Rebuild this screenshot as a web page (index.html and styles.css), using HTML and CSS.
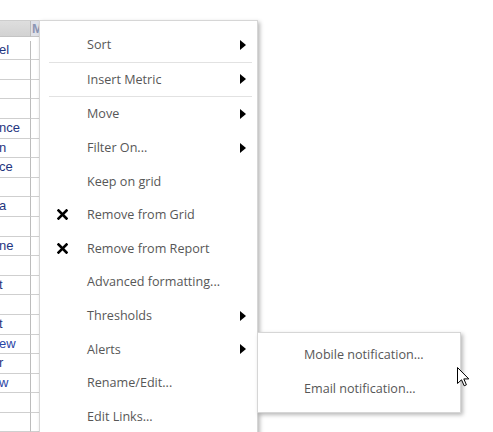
FILE: index.html
```html
<!DOCTYPE html>
<html lang="en">
<head>
<meta charset="utf-8">
<title>Grid context menu</title>
<link rel="stylesheet" href="styles.css">
</head>
<body>
<div class="page">
  <div class="grid">
    <div class="cell head first"></div>
    <div class="cell head second">Measure</div>

    <div class="cell first">el</div><div class="cell"></div>
    <div class="cell first"></div><div class="cell"></div>
    <div class="cell first"></div><div class="cell"></div>
    <div class="cell first"></div><div class="cell"></div>
    <div class="cell first">nce</div><div class="cell"></div>
    <div class="cell first">n</div><div class="cell"></div>
    <div class="cell first">ce</div><div class="cell"></div>
    <div class="cell first"></div><div class="cell"></div>
    <div class="cell first">a</div><div class="cell"></div>
    <div class="cell first"></div><div class="cell"></div>
    <div class="cell first">ne</div><div class="cell"></div>
    <div class="cell first"></div><div class="cell"></div>
    <div class="cell first">t</div><div class="cell"></div>
    <div class="cell first"></div><div class="cell"></div>
    <div class="cell first">t</div><div class="cell"></div>
    <div class="cell first link">ew</div><div class="cell"></div>
    <div class="cell first">r</div><div class="cell"></div>
    <div class="cell first link">w</div><div class="cell"></div>
    <div class="cell first"></div><div class="cell"></div>
    <div class="cell first"></div><div class="cell"></div>
    <div class="cell first"></div><div class="cell"></div>
  </div>

  <div class="menu">
    <div class="item"><span class="icon"></span><span class="label">Sort</span><span class="arrow"></span></div>
    <div class="sep"></div>
    <div class="item"><span class="icon"></span><span class="label">Insert Metric</span><span class="arrow"></span></div>
    <div class="sep"></div>
    <div class="item"><span class="icon"></span><span class="label">Move</span><span class="arrow"></span></div>
    <div class="item"><span class="icon"></span><span class="label">Filter On...</span><span class="arrow"></span></div>
    <div class="item"><span class="icon"></span><span class="label">Keep on grid</span></div>
    <div class="item"><span class="icon"><svg viewBox="0 0 11 11" width="11" height="11"><path d="M1.5 1.5 L9.5 9.5 M9.5 1.5 L1.5 9.5" stroke="#000" stroke-width="2.6" stroke-linecap="square"/></svg></span><span class="label">Remove from Grid</span></div>
    <div class="item"><span class="icon"><svg viewBox="0 0 11 11" width="11" height="11"><path d="M1.5 1.5 L9.5 9.5 M9.5 1.5 L1.5 9.5" stroke="#000" stroke-width="2.6" stroke-linecap="square"/></svg></span><span class="label">Remove from Report</span></div>
    <div class="item"><span class="icon"></span><span class="label">Advanced formatting...</span></div>
    <div class="item"><span class="icon"></span><span class="label">Thresholds</span><span class="arrow"></span></div>
    <div class="item"><span class="icon"></span><span class="label">Alerts</span><span class="arrow"></span></div>
    <div class="item"><span class="icon"></span><span class="label">Rename/Edit...</span></div>
    <div class="item"><span class="icon"></span><span class="label">Edit Links...</span></div>
  </div>

  <div class="submenu">
    <div class="subitem">Mobile notification...</div>
    <div class="subitem">Email notification...</div>
  </div>

  <svg class="cursor" viewBox="0 0 13 20" width="13" height="20">
    <path d="M0.5 0.5 L0.5 16.5 L4.5 12.8 L7.2 18.8 L9.4 17.8 L6.8 11.9 L11.8 11.9 Z" fill="#fff" stroke="#000" stroke-width="1" stroke-linejoin="miter"/>
  </svg>
</div>
</body>
</html>
```

FILE: styles.css
```css
html, body {
  margin: 0;
  padding: 0;
  background: #fff;
}

.page {
  position: relative;
  width: 493px;
  height: 432px;
  overflow: hidden;
  font-family: "Liberation Sans", Arial, sans-serif;
}

/* data grid underneath the menu, scrolled so only the tail of column one shows */
.grid {
  margin-top: 20px;
  width: 116px;
  display: grid;
  grid-template-columns: 31px 85px;
  grid-auto-rows: 19.6px;
  border-top: 1px solid #cdcdcd;
}

.cell {
  box-sizing: border-box;
  border-bottom: 1px solid #cfcfcf;
  font-size: 13px;
  line-height: 18px;
  color: #1f3680;
  white-space: nowrap;
  overflow: hidden;
  text-indent: -1px;
}

.cell.first {
  border-right: 1px solid #bcbcbc;
}

.cell.link {
  color: #2a45a6;
}

.cell.head {
  height: 16px;
  background: linear-gradient(#dedede, #d2d2d2);
  border-bottom: 1px solid #c4c4c4;
}

.grid > .cell.head {
  align-self: start;
}

.cell.head.second {
  background: #dfe1e8;
  color: #8d96b4;
  font-weight: bold;
  font-size: 13px;
  line-height: 15px;
  text-indent: 0;
  padding-left: 1px;
}

/* context menu */
.menu {
  position: absolute;
  left: 39px;
  top: 20px;
  width: 217px;
  height: 430px;
  padding-top: 7px;
  background: #fff;
  border: 1px solid #d6d6d6;
  box-shadow: 2px 2px 4px rgba(0, 0, 0, 0.28);
  font-family: "Open Sans", "Noto Sans", sans-serif;
  font-size: 12.6px;
  color: #575757;
}

.item {
  display: flex;
  align-items: center;
  height: 33.6px;
  padding-left: 17px;
  padding-right: 11px;
}

.icon {
  width: 30px;
  display: flex;
  align-items: center;
}

.icon svg {
  display: block;
}

.label {
  flex: 1;
  white-space: nowrap;
}

.arrow {
  width: 0;
  height: 0;
  border-top: 5px solid transparent;
  border-bottom: 5px solid transparent;
  border-left: 6px solid #000;
}

.sep {
  height: 1px;
  margin: 0 5px 0 9px;
  background: #e2e2e2;
}

/* alerts submenu */
.submenu {
  position: absolute;
  left: 257px;
  top: 332px;
  width: 202px;
  padding: 5px 0 6px;
  background: #fff;
  border: 1px solid #d6d6d6;
  box-shadow: 2px 2px 4px rgba(0, 0, 0, 0.28);
  font-family: "Open Sans", "Noto Sans", sans-serif;
  font-size: 12.6px;
  color: #575757;
}

.subitem {
  height: 34px;
  line-height: 34px;
  padding-left: 46px;
  white-space: nowrap;
}

.cursor {
  position: absolute;
  left: 457px;
  top: 367px;
}
```
